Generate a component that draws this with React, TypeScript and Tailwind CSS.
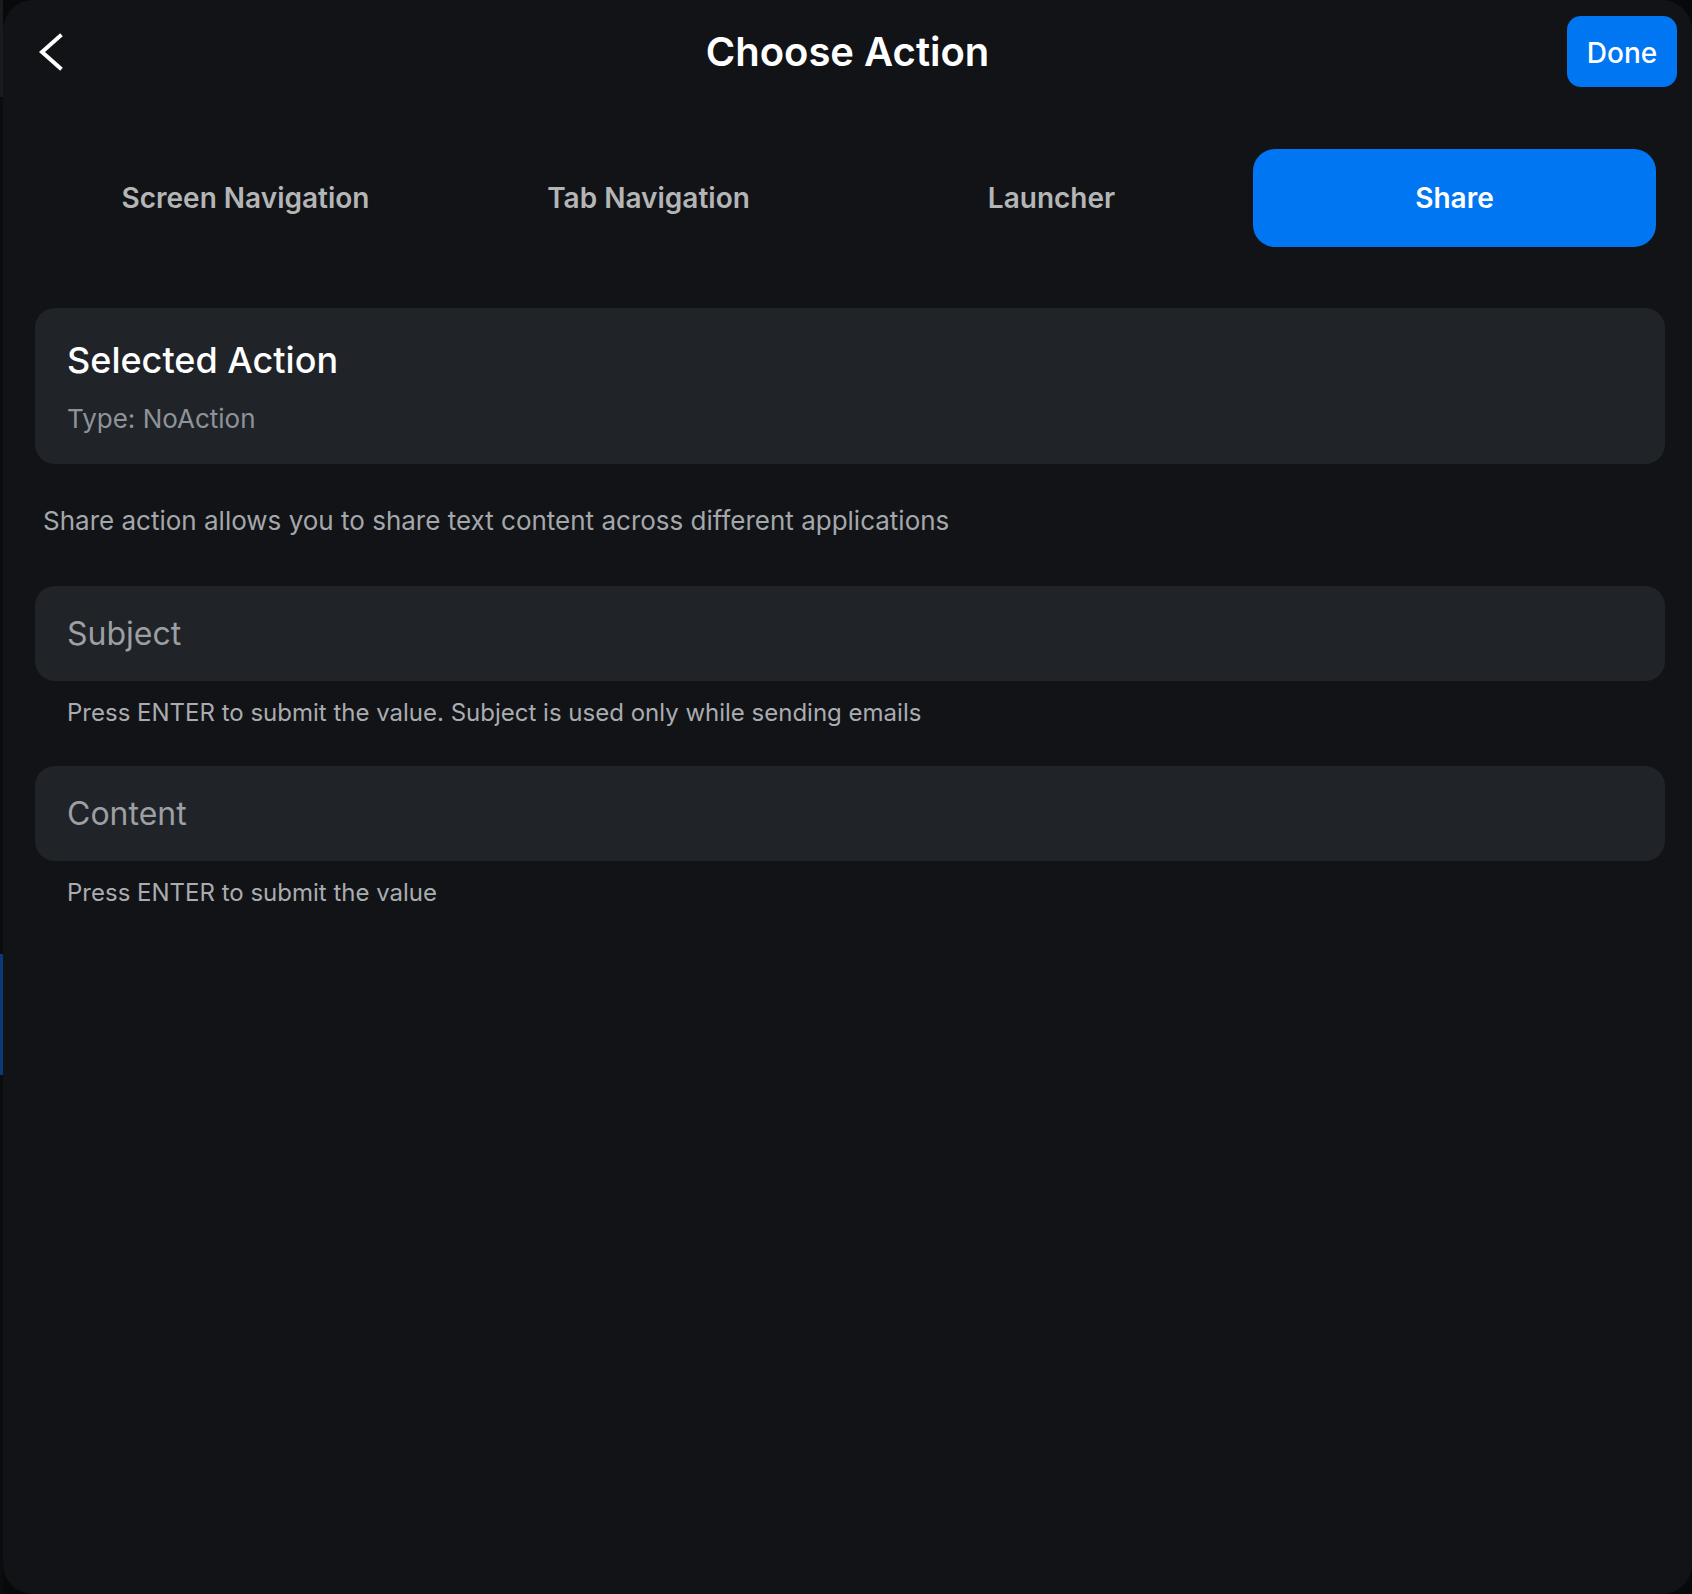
const tabs = ['Screen Navigation', 'Tab Navigation', 'Launcher', 'Share'];
const activeTab = 'Share';

function Field({ placeholder, help }: { placeholder: string; help: string }) {
  return (
    <div>
      <input
        type="text"
        placeholder={placeholder}
        className="w-full h-[95px] rounded-[20px] bg-[#202328] px-8 text-[32px] text-white placeholder:text-[#9c9fa3] outline-none"
      />
      <p className="mt-[16px] pl-8 text-[24px] leading-[32px] text-[#a9acb0]">{help}</p>
    </div>
  );
}

export default function App() {
  return (
    <div className="flex w-[1692px] h-[1594px] bg-[#08090a] font-['Inter','Noto_Sans',sans-serif] overflow-hidden">
      {/* page behind the sheet */}
      <div className="flex flex-col w-[3px] shrink-0">
        <div className="h-[97px] bg-[#191b1e]" />
        <div className="h-[857px] bg-[#0b0c0e]" />
        <div className="h-[121px] bg-[#0a3a78]" />
        <div className="flex-1 bg-[#0b0c0e]" />
      </div>

      {/* sheet */}
      <div className="flex-1 flex flex-col bg-[#121316] rounded-[30px]">
        {/* Header */}
        <div className="grid grid-cols-[1fr_auto_1fr] items-center h-[103px]">
          <div className="pl-[36px]">
            <button className="flex items-center">
              <svg width="24" height="38" viewBox="0 0 24 38" fill="none" stroke="white" strokeWidth={4} strokeLinecap="square">
                <polyline points="21,3 3,19 21,35" />
              </svg>
            </button>
          </div>
          <h1 className="text-[40px] font-semibold text-white">Choose Action</h1>
          <div className="flex justify-end pr-[15px]">
            <button className="w-[110px] h-[71px] rounded-[14px] bg-[#0176f2] text-white text-[28px] font-medium pt-[3px]">
              Done
            </button>
          </div>
        </div>

        <div className="flex flex-col pl-8 pr-[27px]">
          {/* Tabs */}
          <div className="grid grid-cols-4 mx-[9px] mt-[46px] h-[98px]">
            {tabs.map((t) => (
              <button
                key={t}
                className={
                  t === activeTab
                    ? 'rounded-[22px] bg-[#0176f2] text-white text-[28px] font-semibold'
                    : 'rounded-[22px] text-[#b4b5b7] text-[28px] font-semibold'
                }
              >
                {t}
              </button>
            ))}
          </div>

          {/* Selected action */}
          <div className="mt-[61px] rounded-[20px] bg-[#202328] pt-8 pb-[30px] px-8">
            <p className="text-[36px] leading-[40px] font-medium text-white">Selected Action</p>
            <p className="mt-6 text-[26px] leading-[30px] text-[#8f9398]">Type: NoAction</p>
          </div>

          <p className="mt-[40px] ml-2 text-[26px] leading-[34px] text-[#a4a7ab]">
            Share action allows you to share text content across different applications
          </p>

          <div className="mt-[48px] flex flex-col gap-[37px]">
            <Field
              placeholder="Subject"
              help="Press ENTER to submit the value. Subject is used only while sending emails"
            />
            <Field placeholder="Content" help="Press ENTER to submit the value" />
          </div>
        </div>
      </div>
    </div>
  );
}
